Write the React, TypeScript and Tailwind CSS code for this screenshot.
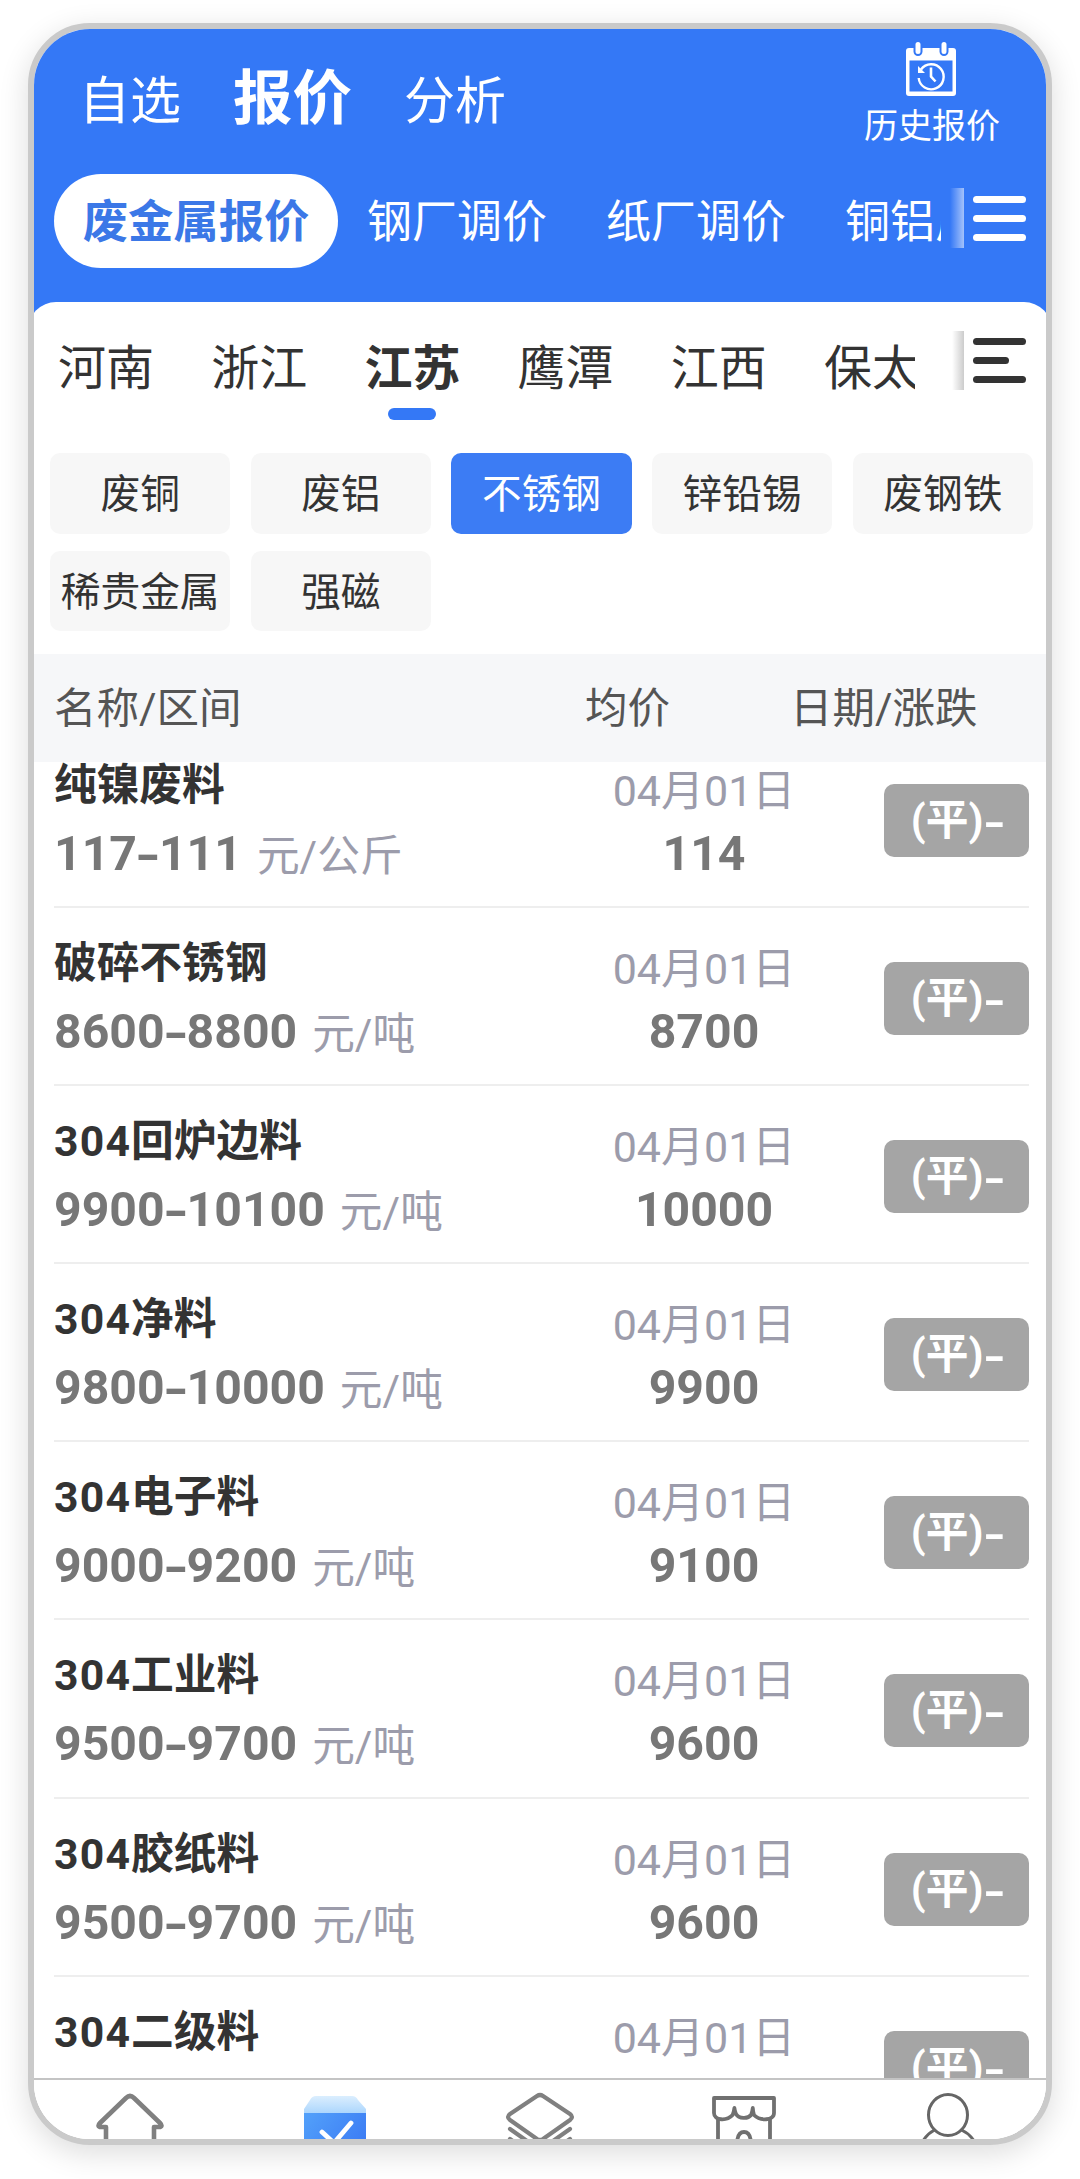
import type { ReactNode } from "react";
import clsx from "clsx";

type Quote = { name: string; range: [string, string]; unit: string; avg: string };

const MARKETS = ["钢厂调价", "纸厂调价", "铜铝厂调价"];
const REGIONS = ["河南", "浙江", "江苏", "鹰潭", "江西", "保太"];
const METALS = ["废铜", "废铝", "不锈钢", "锌铅锡", "废钢铁", "稀贵金属", "强磁"];

const QUOTES: Quote[] = [
  { name: "纯镍废料", range: ["117", "111"], unit: "元/公斤", avg: "114" },
  { name: "破碎不锈钢", range: ["8600", "8800"], unit: "元/吨", avg: "8700" },
  { name: "304回炉边料", range: ["9900", "10100"], unit: "元/吨", avg: "10000" },
  { name: "304净料", range: ["9800", "10000"], unit: "元/吨", avg: "9900" },
  { name: "304电子料", range: ["9000", "9200"], unit: "元/吨", avg: "9100" },
  { name: "304工业料", range: ["9500", "9700"], unit: "元/吨", avg: "9600" },
  { name: "304胶纸料", range: ["9500", "9700"], unit: "元/吨", avg: "9600" },
  { name: "304二级料", range: ["9500", "9700"], unit: "元/吨", avg: "9600" },
];

function HistoryIcon() {
  return (
    <svg width="52" height="54" viewBox="0 0 52 54" fill="none">
      <path d="M4 6h44a3 3 0 0 1 3 3v42a3 3 0 0 1-3 3H4a3 3 0 0 1-3-3V9a3 3 0 0 1 3-3Z" fill="#fff" />
      <path d="M4.500 18.500h43v31h-43Z" fill="#3478f6" />
      <path d="M13 2.500v7M39 2.500v7" stroke="#3478f6" strokeWidth="9" strokeLinecap="round" />
      <path d="M13 2.500v7M39 2.500v7" stroke="#fff" strokeWidth="5" strokeLinecap="round" />
      <path d="M16 27.500A12.500 12.500 0 1 1 13.700 36" stroke="#fff" strokeWidth="2.400" />
      <path d="M13 24v7h7Z" fill="#fff" />
      <path d="M26 25.500v9l4.500 5" stroke="#fff" strokeWidth="2.600" />
    </svg>
  );
}

function MenuLines({ short = false }: { short?: boolean }) {
  return (
    <div className="flex flex-col gap-[12.2px] w-[53px]">
      <span className="h-[6.8px] rounded-full bg-current" />
      <span className={clsx("h-[6.8px] rounded-full bg-current", short && "w-[35.5px]")} />
      <span className="h-[6.8px] rounded-full bg-current" />
    </div>
  );
}

function NavIcon({ children }: { children: ReactNode }) {
  return (
    <svg width="72" height="70" viewBox="0 0 72 70" fill="none" strokeLinecap="round" strokeLinejoin="round" className="shrink-0">
      {children}
    </svg>
  );
}

function Header() {
  return (
    <header className="bg-[#3478f6] text-white h-[301px] shrink-0">
      <div className="flex justify-between h-[145px] pl-[45px] pr-[46px]">
        <div className="flex items-baseline gap-[52px] pt-[38px] leading-[64px]">
          <span className="text-[51px]">自选</span>
          <span className="text-[59.500px] font-bold">报价</span>
          <span className="text-[51px]">分析</span>
        </div>
        <div className="flex flex-col items-center pt-[13px]">
          <span className="-ml-[3px]">
            <HistoryIcon />
          </span>
          <span className="text-[34px] leading-[40px] mt-[10px]">历史报价</span>
        </div>
      </div>
      <div className="flex h-[94px] pl-[20px] text-[45px] leading-[98px]">
        <div className="flex w-[887px] overflow-hidden whitespace-nowrap">
          <span className="bg-white text-[#3b78e7] font-bold rounded-full w-[284px] text-center text-[45.300px] shrink-0 mr-[29px]">废金属报价</span>
          {MARKETS.map((m) => (
            <span key={m} className="mr-[59px] shrink-0">{m}</span>
          ))}
        </div>
        <div className="mt-[14px] ml-[9px] w-[14px] h-[60px] bg-linear-to-r from-white/0 to-white/55" />
        <div className="mt-[22px] ml-[9px]">
          <MenuLines />
        </div>
      </div>
    </header>
  );
}

function RegionTabs() {
  return (
    <div className="flex h-[151px] pl-[24px] text-[#333]">
      <div className="flex gap-[57.2px] w-[857px] overflow-hidden whitespace-nowrap text-[48px] leading-[56px] pt-[39px]">
        {REGIONS.map((r) => (
          <div key={r} className="flex flex-col items-center shrink-0">
            <span className={r === "江苏" ? "font-bold" : ""}>{r}</span>
            {r === "江苏" && <span className="mt-[11px] w-[48px] h-[12px] rounded-full bg-[#3478f6]" />}
          </div>
        ))}
      </div>
      <div className="mt-[29px] ml-[37px] w-[12px] h-[59px] bg-linear-to-r from-black/0 to-black/20" />
      <div className="mt-[36px] ml-[9px]">
        <MenuLines short />
      </div>
    </div>
  );
}

function QuoteRow({ quote }: { quote: Quote }) {
  const digits = quote.name.match(/^\d+/)?.[0] ?? "";
  return (
    <div className="flex h-[178.1px] shrink-0 border-b-2 border-[#eee]">
      <div className="w-[540px] pt-[30px]">
        <p className="text-[42.7px] leading-[50px] font-bold text-[#333]">
          <span className="tracking-[1.2px]">{digits}</span>
          {quote.name.slice(digits.length)}
        </p>
        <p className="flex items-baseline text-[48.2px] leading-[56px] mt-[16px] font-bold text-[#777]">
          {quote.range[0]}
          <span className="w-[22px] text-center relative top-[2px] scale-x-140">-</span>
          {quote.range[1]}
          <span className="ml-[15px] relative top-px text-[42.7px] font-normal text-[#9c9cab]">{quote.unit}</span>
        </p>
      </div>
      <div className="w-[220px] pt-[36px] text-center">
        <p className="text-[43px] leading-[50px] text-[#9c9cab]">04月01日</p>
        <p className="text-[48.2px] leading-[56px] mt-[10px] font-bold text-[#777]">{quote.avg}</p>
      </div>
      <div className="flex justify-center ml-auto mt-[54px] w-[145px] h-[73px] rounded-[10px] bg-[#a5a5a5] text-white text-[42.7px] leading-[73px] font-bold">
        (平)<span className="relative top-[3px] ml-[3px] -mr-px scale-x-140">-</span>
      </div>
    </div>
  );
}

function BottomNav() {
  return (
    <nav className="-mx-[6px] h-[61px] shrink-0 border-t-2 border-[#c4c4c4] bg-white grid grid-cols-5 justify-items-center items-start pt-[12px] overflow-hidden">
      <NavIcon>
        <path
          d="M12 60V35H6q-3-1 0-4L32 6q4-4 8 0l26 25q3 3 0 4h-6v25"
          stroke="#808080" strokeWidth="4.600"
        />
      </NavIcon>
      <NavIcon>
        <defs>
          <linearGradient id="lid" x1="0" y1="0" x2="0" y2="1">
            <stop stopColor="#dbeefe" />
            <stop offset="1" stopColor="#acd6fd" />
          </linearGradient>
          <linearGradient id="box" x1="0" y1="0" x2="1" y2="0.6">
            <stop stopColor="#53a1fa" />
            <stop offset="1" stopColor="#3c7cf4" />
          </linearGradient>
        </defs>
        <path d="M5 21V17l6-9q2-4 6-4h36q4 0 6 4l8 9v4Z" fill="url(#lid)" />
        <path d="M5 21h62v48H5Z" fill="url(#box)" />
        <path d="m23 40 12 11 17-20" stroke="#fff" strokeWidth="4.800" />
      </NavIcon>
      <NavIcon>
        <g stroke="#808080" strokeWidth="4.200">
          <path d="M33 4q3-2 6 0l27 18q4 3 0 6L39 47q-3 2-6 0L6 28q-4-3 0-6Z" />
          <path d="m6 37 27 19q3 2 6 0l27-19M6 47l27 19q3 2 6 0l27-19" />
        </g>
      </NavIcon>
      <NavIcon>
        <g stroke="#707070" strokeWidth="3.800">
          <path d="M5 6h60v15c0 8-14 8-20 2q-1-3-1.200-7-.4 4-1.800 7c-3 4-12 4-15-1q-1.400-3-1.600-6-.4 4-1.800 7C18 29 5 29 5 21Z" />
          <path d="M9 27v40M61 27v40M28 53q0-13 7-13t7 13" />
        </g>
      </NavIcon>
      <NavIcon>
        <g stroke="#666" strokeWidth="3">
          <ellipse cx="34" cy="23" rx="19.500" ry="20.600" />
          <path d="M20.500 38Q13 42 9 49M47.500 38Q56 42 60 49" />
        </g>
      </NavIcon>
    </nav>
  );
}

export default function App() {
  return (
    <div className="w-[1080px] h-[2179px] bg-white pt-[23px] pl-[28px] overflow-hidden font-[Roboto,'Noto_Sans_CJK_SC',sans-serif]">
      <div className="flex flex-col w-[1024px] h-[2122px] rounded-[62px] border-6 border-[#cacaca] bg-white overflow-hidden shadow-[0_8px_30px_rgba(0,0,0,0.14)]">
        <Header />
        <main className="relative flex flex-col flex-1 min-h-0 -mt-[28px] -mx-[6px] px-[6px] rounded-t-[28px] bg-white">
          <RegionTabs />
          <div className="grid grid-cols-5 gap-x-[20.3px] gap-y-[17px] h-[201px] content-start pl-[16px] pr-[13px] text-[39.700px]">
            {METALS.map((m) => (
              <span
                key={m}
                className={clsx(
                  "h-[80.5px] leading-[83px] rounded-[10px] text-center whitespace-nowrap",
                  m === "不锈钢" ? "bg-[#3c7cf4] text-white" : "bg-[#f7f7f7] text-[#333]",
                )}
              >
                {m}
              </span>
            ))}
          </div>
          <div className="flex h-[108px] shrink-0 bg-[#f6f7f9] pl-[20px] text-[42.500px] leading-[109px] text-[#555]">
            <span className="w-[531px]">名称/区间</span>
            <span className="w-[205px]">均价</span>
            <span>日期/涨跌</span>
          </div>
          <div className="flex-1 min-h-0 overflow-hidden px-[20px] pr-[17px]">
            <div className="flex flex-col -mt-[32px]">
              {QUOTES.map((q) => (
                <QuoteRow key={q.name} quote={q} />
              ))}
            </div>
          </div>
          <BottomNav />
        </main>
      </div>
    </div>
  );
}
